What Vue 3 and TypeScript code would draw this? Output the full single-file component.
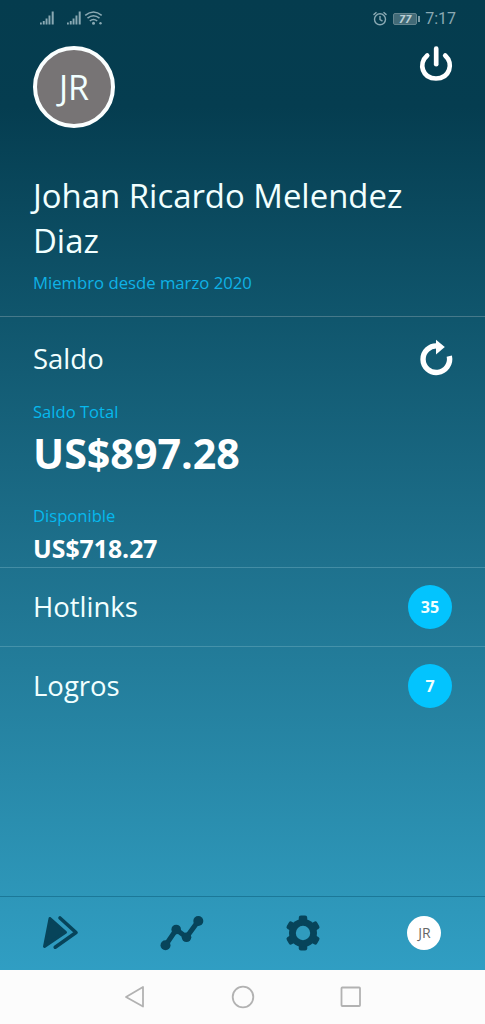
<script setup lang="ts">
interface Section {
  title: string
  count: number
}

const user = {
  initials: 'JR',
  name: 'Johan Ricardo Melendez Diaz',
  since: 'Miembro desde marzo 2020',
}
const total: string = 'US$897.28'
const available: string = 'US$718.27'
const sections: Section[] = [
  { title: 'Hotlinks', count: 35 },
  { title: 'Logros', count: 7 },
]
</script>

<template>
  <div class="phone">
    <main class="screen">
      <div class="status">
        <svg class="signals" width="70" height="20" viewBox="0 0 70 20">
          <g fill="currentColor">
            <path d="M1 13.5h1.8v2H1zM3.8 12h1.9v3.5H3.8zM6.6 9.5h1.9v6H6.6zM9.5 6.5h1.9v9H9.5zM12.7 2.5h2v13h-2z" />
            <path transform="translate(27 0)" d="M1 13.5h1.8v2H1zM3.8 12h1.9v3.5H3.8zM6.6 9.5h1.9v6H6.6zM9.5 6.5h1.9v9H9.5zM12.7 2.5h2v13h-2z" />
            <circle cx="54.5" cy="14.3" r="1.5" />
            <circle cx="61.5" cy="14.3" r="1.2" />
          </g>
          <g fill="none" stroke="currentColor" stroke-width="1.6">
            <path d="M46.2 6.3q8.3-6.6 16.5 0M48.5 9.2q6-4.8 12 0M50.8 12q3.7-3 7.4 0" />
          </g>
        </svg>
        <div class="status-right">
          <svg width="16" height="16" viewBox="0 0 16 16" fill="none" stroke="currentColor" stroke-width="1.400">
            <circle cx="8" cy="8.3" r="5.500" />
            <path d="M8 5v3.600l2.500 1.600M1.500 3.900l3-2.600M14.500 3.900l-3-2.600" />
          </svg>
          <span class="battery">77</span>
          <span class="clock">7:17</span>
        </div>
      </div>

      <header class="profile">
        <div class="profile-top">
          <div class="avatar"><span>{{ user.initials }}</span></div>
          <svg class="power" width="36" height="38" viewBox="0 0 36 38" fill="none" stroke="#fff" stroke-linecap="round">
            <path stroke-width="4.700" d="M18.200 2.700v15.500" />
            <path stroke-width="4.700" d="M9.200 9.500C-0.200 17.800 4.600 32.500 18 32.500S36.200 17.800 27.200 9.500" />
          </svg>
        </div>
        <h1>{{ user.name }}</h1>
        <p class="since">{{ user.since }}</p>
      </header>

      <section class="balance">
        <div class="balance-head">
          <h2>Saldo</h2>
          <svg width="36" height="40" viewBox="0 0 36 40">
            <path d="M18.500 6.900A13.300 13.300 0 1 0 30.300 17.200" fill="none" stroke="#fff" stroke-width="5.400" />
            <path d="M17 0.800v14.800l8.800-7.500z" fill="#fff" />
          </svg>
        </div>
        <p class="label">Saldo Total</p>
        <p class="total">{{ total }}</p>
        <p class="label second">Disponible</p>
        <p class="available">{{ available }}</p>
      </section>

      <section v-for="item in sections" :key="item.title" class="row">
        <h2>{{ item.title }}</h2>
        <span class="badge">{{ item.count }}</span>
      </section>

      <nav class="tabs">
        <div class="tab">
          <svg width="38" height="36" viewBox="0 0 38 36">
            <path d="M8 3.500L23.500 17.300 2.500 31.500z" fill="#07445a" stroke="#07445a" stroke-width="3" stroke-linejoin="round" />
            <path d="M18 3L34 17.500 13.200 32.200" fill="none" stroke="#07445a" stroke-width="3.600" stroke-linecap="round" stroke-linejoin="round" />
          </svg>
        </div>
        <div class="tab">
          <svg width="44" height="36" viewBox="0 0 44 36" fill="#07445a">
            <path d="M5.500 30.300L16.200 14.500 26.500 22.300 38.300 6" fill="none" stroke="#07445a" stroke-width="5" />
            <circle cx="5.500" cy="30.300" r="5" />
            <circle cx="16.200" cy="14.500" r="4.800" />
            <circle cx="26.500" cy="22.300" r="4.800" />
            <circle cx="38.300" cy="6" r="5" />
          </svg>
        </div>
        <div class="tab">
          <svg width="36" height="36" viewBox="0 0 36 36">
            <g fill="#07445a">
              <rect x="13.750" y="0.500" width="8.500" height="35" rx="2.200" />
              <rect x="13.750" y="0.500" width="8.500" height="35" rx="2.200" transform="rotate(60 18 18)" />
              <rect x="13.750" y="0.500" width="8.500" height="35" rx="2.200" transform="rotate(120 18 18)" />
              <circle cx="18" cy="18" r="14" />
            </g>
            <circle cx="18" cy="18" r="7.200" fill="#309bbd" />
          </svg>
        </div>
        <div class="tab"><span class="mini-avatar">{{ user.initials }}</span></div>
      </nav>
    </main>

    <footer class="system">
      <svg width="22" height="24" viewBox="0 0 22 24"><path d="M19 2v19.500L2 12z" /></svg>
      <svg width="24" height="24" viewBox="0 0 24 24"><circle cx="12" cy="12" r="10.300" /></svg>
      <svg width="22" height="22" viewBox="0 0 22 22"><rect x="1.500" y="1.500" width="18.500" height="18.500" rx="0.800" /></svg>
    </footer>
  </div>
</template>

<style>
body {
  margin: 0;
}
</style>

<style scoped>
.phone {
  width: 485px;
  height: 1024px;
  overflow: hidden;
  display: flex;
  flex-direction: column;
  font-family: "Open Sans", "Noto Sans", sans-serif;
  color: #f1ffff;
}
.screen {
  height: 970px;
  box-sizing: border-box;
  display: flex;
  flex-direction: column;
  background: linear-gradient(#053c4e 0%, #053d50 11%, #10566d 33%, #1e718d 58%, #2d95b7 91%, #309ec3 100%);
}
h1,
h2,
p {
  margin: 0;
  font-weight: 400;
}
.status {
  height: 37px;
  box-sizing: border-box;
  padding: 9px 29px 0 39px;
  display: flex;
  justify-content: space-between;
  color: #8aa9b3;
}
.status-right {
  height: 20px;
  display: flex;
  align-items: center;
}
.battery {
  position: relative;
  width: 24px;
  height: 12px;
  box-sizing: border-box;
  margin: 0 8px 0 5px;
  border: 1px solid #64858f;
  border-radius: 2px;
  background: #426a77;
  color: #b9cfd6;
  font: italic bold 11px/10px "Open Sans", sans-serif;
  text-align: center;
}
.battery::after {
  content: "";
  position: absolute;
  left: 24px;
  top: 2px;
  width: 2px;
  height: 6px;
  background: #7d9ca6;
}
.clock {
  font: 16px/20px Roboto, sans-serif;
}
.profile {
  height: 280px;
  box-sizing: border-box;
  border-bottom: 1px solid #46798a;
  padding: 9px 31px 0 33px;
}
.profile-top {
  display: flex;
  justify-content: space-between;
}
.avatar {
  width: 82px;
  height: 82px;
  box-sizing: border-box;
  border: 4px solid #fafefe;
  border-radius: 50%;
  background: #777475;
  display: flex;
  align-items: center;
  justify-content: center;
  font-size: 34px;
  line-height: 46px;
}
h1 {
  margin-top: 45px;
  font-size: 32.900px;
  line-height: 45px;
}
.since {
  margin-top: 9px;
  font-size: 16.700px;
  line-height: 22px;
  color: #0fb2e6;
}
.balance {
  height: 251px;
  box-sizing: border-box;
  border-bottom: 1px solid #438da5;
  padding: 19px 30px 0 33px;
}
.balance-head {
  height: 46px;
  display: flex;
  justify-content: space-between;
  align-items: center;
}
h2 {
  font-size: 27.500px;
  line-height: 38px;
}
.label {
  margin-top: 19px;
  font-size: 16.600px;
  line-height: 22px;
  color: #06b9ee;
}
.total {
  margin-top: 1px;
  font-size: 41.200px;
  line-height: 58px;
  font-weight: 700;
  color: #fff;
}
.label.second {
  margin-top: 23px;
}
.available {
  margin-top: 5px;
  font-size: 24.800px;
  line-height: 33px;
  font-weight: 700;
  color: #fff;
}
.row {
  height: 78px;
  padding: 0 33px;
  display: flex;
  align-items: center;
  justify-content: space-between;
}
.row + .row {
  border-top: 1px solid #4592aa;
}
.badge {
  width: 44px;
  height: 44px;
  border-radius: 50%;
  background: #03c4fe;
  font-size: 16px;
  line-height: 44px;
  font-weight: 700;
  text-align: center;
}
.tabs {
  margin-top: auto;
  height: 74px;
  box-sizing: border-box;
  padding-bottom: 1px;
  border-top: 1px solid #1b7898;
  display: grid;
  grid-template-columns: repeat(4, 1fr);
}
.tab {
  display: flex;
  align-items: center;
  justify-content: center;
}
.mini-avatar {
  width: 34px;
  height: 34px;
  border-radius: 50%;
  background: #fff;
  color: #666;
  font-size: 14px;
  line-height: 34px;
  text-align: center;
}
.system {
  flex: 1;
  background: #fcfcfc;
  display: flex;
  align-items: center;
  justify-content: center;
  gap: 85px;
}
.system svg {
  fill: none;
  stroke: #b2b2b2;
  stroke-width: 1.800;
  stroke-linejoin: round;
}
</style>
